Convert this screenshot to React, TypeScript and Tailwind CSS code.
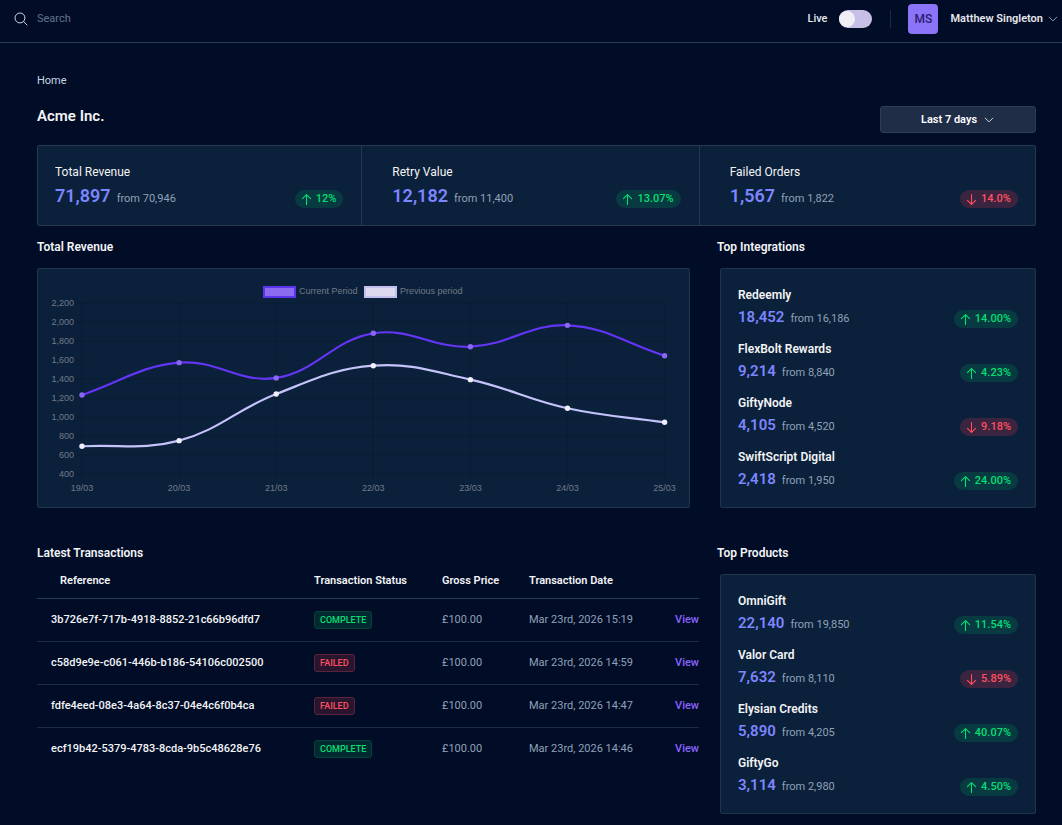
import { useState } from "react";
import {
  HiOutlineArrowDown,
  HiOutlineArrowUp,
  HiOutlineChevronDown,
  HiOutlineMagnifyingGlass,
} from "react-icons/hi2";

type Metric = {
  name: string;
  value: string;
  from: string;
  change: string;
  up: boolean;
};

type Point = { x: number; y: number };

const stats: Metric[] = [
  { name: "Total Revenue", value: "71,897", from: "70,946", change: "12%", up: true },
  { name: "Retry Value", value: "12,182", from: "11,400", change: "13.07%", up: true },
  { name: "Failed Orders", value: "1,567", from: "1,822", change: "14.0%", up: false },
];

const integrations: Metric[] = [
  { name: "Redeemly", value: "18,452", from: "16,186", change: "14.00%", up: true },
  { name: "FlexBolt Rewards", value: "9,214", from: "8,840", change: "4.23%", up: true },
  { name: "GiftyNode", value: "4,105", from: "4,520", change: "9.18%", up: false },
  { name: "SwiftScript Digital", value: "2,418", from: "1,950", change: "24.00%", up: true },
];

const products: Metric[] = [
  { name: "OmniGift", value: "22,140", from: "19,850", change: "11.54%", up: true },
  { name: "Valor Card", value: "7,632", from: "8,110", change: "5.89%", up: false },
  { name: "Elysian Credits", value: "5,890", from: "4,205", change: "40.07%", up: true },
  { name: "GiftyGo", value: "3,114", from: "2,980", change: "4.50%", up: true },
];

const transactions = [
  { ref: "3b726e7f-717b-4918-8852-21c66b96dfd7", status: "COMPLETE", price: "£100.00", date: "Mar 23rd, 2026 15:19" },
  { ref: "c58d9e9e-c061-446b-b186-54106c002500", status: "FAILED", price: "£100.00", date: "Mar 23rd, 2026 14:59" },
  { ref: "fdfe4eed-08e3-4a64-8c37-04e4c6f0b4ca", status: "FAILED", price: "£100.00", date: "Mar 23rd, 2026 14:47" },
  { ref: "ecf19b42-5379-4783-8cda-9b5c48628e76", status: "COMPLETE", price: "£100.00", date: "Mar 23rd, 2026 14:46" },
];

const days = ["19/03", "20/03", "21/03", "22/03", "23/03", "24/03", "25/03"];
const ticks = [2200, 2000, 1800, 1600, 1400, 1200, 1000, 800, 600, 400];
const current = [1232, 1572, 1411, 1881, 1740, 1965, 1645];
const previous = [692, 751, 1242, 1540, 1393, 1092, 944];

const xAt = (i: number) => 44 + i * 97.1;
const yAt = (value: number) => 205 - ((value - 400) * 19) / 200;

// Smooth line through the points, control handles scaled by neighbour distance
function splinePath(points: Point[], tension = 0.4) {
  const dist = (a: Point, b: Point) => Math.hypot(b.x - a.x, b.y - a.y);
  const handles = points.map((p, i) => {
    const prev = points[i - 1] || p;
    const next = points[i + 1] || p;
    const d01 = dist(prev, p);
    const d12 = dist(p, next);
    const a = (tension * d01) / (d01 + d12);
    const b = (tension * d12) / (d01 + d12);
    return {
      before: { x: p.x - a * (next.x - prev.x), y: p.y - a * (next.y - prev.y) },
      after: { x: p.x + b * (next.x - prev.x), y: p.y + b * (next.y - prev.y) },
    };
  });
  return points.reduce((d, p, i) => {
    if (i === 0) return `M${p.x} ${p.y}`;
    const c1 = handles[i - 1].after;
    const c2 = handles[i].before;
    return `${d}C${c1.x} ${c1.y} ${c2.x} ${c2.y} ${p.x} ${p.y}`;
  }, "");
}

function Series({ values, line, dot }: { values: number[]; line: string; dot: string }) {
  const points = values.map((v, i) => ({ x: xAt(i), y: yAt(v) }));
  return (
    <g>
      <path d={splinePath(points)} fill="none" stroke={line} strokeWidth="2.2" />
      {points.map((p) => (
        <circle key={p.x} cx={p.x} cy={p.y} r="2.7" fill={dot} />
      ))}
    </g>
  );
}

function RevenueChart() {
  return (
    <svg
      viewBox="0 0 651 238"
      role="img"
      aria-label="Total Revenue"
      className="block h-auto w-full font-['Liberation_Sans',Arial,sans-serif] text-[9px]"
    >
      <g stroke="#000" strokeOpacity="0.1">
        {ticks.map((t) => (
          <line key={t} x1="38" x2="627" y1={yAt(t)} y2={yAt(t)} />
        ))}
        {days.map((d, i) => (
          <line key={d} x1={xAt(i)} x2={xAt(i)} y1="34" y2="211" />
        ))}
      </g>

      <rect x="226" y="18" width="31" height="10" fill="#8b6cf0" stroke="#5b35ee" strokeWidth="2" />
      <rect x="327" y="18" width="31" height="10" fill="#ddd9f0" stroke="#c3bfee" strokeWidth="2" />

      <g fill="#717b88">
        <text x="261" y="25">Current Period</text>
        <text x="362" y="25">Previous period</text>
        {ticks.map((t) => (
          <text key={t} x="36" y={yAt(t) + 3} textAnchor="end">
            {t.toLocaleString("en-GB")}
          </text>
        ))}
        {days.map((d, i) => (
          <text key={d} x={xAt(i)} y="222" textAnchor="middle">
            {d}
          </text>
        ))}
      </g>

      <Series values={previous} line="#c4c4fa" dot="#f0effe" />
      <Series values={current} line="#6335f5" dot="#8a66f5" />
    </svg>
  );
}

function ChangePill({ change, up }: { change: string; up: boolean }) {
  const Icon = up ? HiOutlineArrowUp : HiOutlineArrowDown;
  return (
    <span
      className={`mb-px flex h-[18px] items-center gap-[3px] rounded-full pr-[7px] pl-[5px] text-[11px] leading-4 font-medium ${
        up ? "bg-[#073a41] text-[#05df72]" : "bg-[#3b243f] text-[#ff5060]"
      }`}
    >
      <Icon className="size-[13px]" strokeWidth={2} aria-hidden="true" />
      {change}
    </span>
  );
}

function MetricList({ items }: { items: Metric[] }) {
  return (
    <ul className="ml-[3px] space-y-2.5 rounded-xs border border-[#1f354b] bg-[#0b203a] px-[17px] py-4">
      {items.map((item) => (
        <li key={item.name}>
          <h3 className="text-xs leading-5 font-semibold text-gray-100">{item.name}</h3>
          <div className="flex h-6 items-end justify-between">
            <p className="flex items-baseline gap-1.5">
              <span className="text-[15px] leading-6 font-semibold text-[#7c86ff]">{item.value}</span>
              <span className="text-slate-400">from {item.from}</span>
            </p>
            <ChangePill change={item.change} up={item.up} />
          </div>
        </li>
      ))}
    </ul>
  );
}

function SectionTitle({ children }: { children: string }) {
  return <h2 className="mb-[13px] text-xs leading-4 font-semibold text-gray-100">{children}</h2>;
}

export default function App() {
  const [live, setLive] = useState(false);

  return (
    <div className="min-h-screen bg-[#010c26] font-[Roboto,sans-serif] text-[11px] leading-4 text-white antialiased">
      <header className="flex h-[43px] items-center border-b border-[#2b3b52] pr-[3px] pb-1 pl-[13px]">
        <label htmlFor="search" aria-label="Search" className="mr-2">
          <HiOutlineMagnifyingGlass className="size-4 text-slate-300" aria-hidden="true" />
        </label>
        <input
          id="search"
          type="search"
          placeholder="Search"
          className="min-w-0 flex-1 bg-transparent outline-none placeholder:text-slate-500"
        />
        <label htmlFor="live" className="mr-3 font-medium text-gray-200">
          Live
        </label>
        <input
          id="live"
          type="checkbox"
          role="switch"
          checked={live}
          onChange={(e) => setLive(e.target.checked)}
          className="h-[18px] w-[33px] cursor-pointer appearance-none rounded-full bg-[#c6c0e6] before:block before:size-4 before:translate-y-px before:rounded-full before:bg-[#f1eff5] checked:bg-violet-500 checked:before:translate-x-4"
        />
        <div className="mr-[17px] ml-[18px] h-[18px] w-px bg-[#1a2a44]" />
        <button type="button" className="flex items-center">
          <span className="flex size-[30px] items-center justify-center rounded bg-[#8b74f7] text-xs font-medium text-[#2a1c70]">
            MS
          </span>
          <span className="mr-1 ml-3 font-semibold text-gray-200">Matthew Singleton</span>
          <HiOutlineChevronDown className="size-3 text-slate-400" strokeWidth={2} aria-hidden="true" />
        </button>
      </header>

      <main className="pt-[30px] pr-[26px] pb-[11px] pl-[37px]">
        <nav aria-label="Breadcrumb">
          <a href="#" className="block text-slate-300">
            Home
          </a>
        </nav>

        <div className="mt-[17px] mb-3 flex items-start justify-between">
          <h1 className="text-[15px] leading-5 font-semibold text-gray-100">Acme Inc.</h1>
          <button
            type="button"
            className="flex h-[27px] w-[156px] items-center justify-center gap-1.5 rounded-[3px] border border-[#2e3d55] bg-[#1f2d47] font-semibold"
          >
            Last 7 days
            <HiOutlineChevronDown className="size-3 text-slate-300" strokeWidth={2} aria-hidden="true" />
          </button>
        </div>

        <dl className="flex divide-x divide-[#243a51] rounded-xs border border-[#243a51] bg-[#0b203a]">
          {stats.map((stat) => (
            <div key={stat.name} className="flex-1 py-4 pr-[18px] pl-[30px] first:pl-[17px] last:pr-[17px]">
              <dt className="text-xs leading-5 text-gray-100">{stat.name}</dt>
              <dd className="flex h-[27px] items-end justify-between">
                <p className="flex items-baseline gap-1.5">
                  <span className="text-lg leading-[26px] font-semibold text-[#7c86ff]">{stat.value}</span>
                  <span className="text-slate-400">from {stat.from}</span>
                </p>
                <ChangePill change={stat.change} up={stat.up} />
              </dd>
            </div>
          ))}
        </dl>

        <div className="mt-[13px] grid grid-cols-[minmax(0,1fr)_319px] gap-x-[18px] gap-y-[37px]">
          <section>
            <SectionTitle>Total Revenue</SectionTitle>
            <div className="mr-[9px] rounded-xs border border-[#1f354b] bg-[#0b203a]">
              <RevenueChart />
            </div>
          </section>

          <section>
            <SectionTitle>Top Integrations</SectionTitle>
            <MetricList items={integrations} />
          </section>

          <section>
            <h2 className="text-xs leading-4 font-semibold text-gray-100">Latest Transactions</h2>
            <table className="w-full table-fixed text-left">
              <thead>
                <tr className="h-[37px] border-b border-[#2b3b52] text-gray-100 *:pt-[3px]">
                  <th className="w-[277px] pl-[23px] font-semibold">Reference</th>
                  <th className="w-32 font-semibold">Transaction Status</th>
                  <th className="w-[87px] font-semibold">Gross Price</th>
                  <th className="font-semibold">Transaction Date</th>
                  <th className="w-10" aria-label="Actions" />
                </tr>
              </thead>
              <tbody className="divide-y divide-[#1d2c43]">
                {transactions.map((tx) => (
                  <tr key={tx.ref} className="h-[43px] *:pt-px">
                    <td className="pl-3.5 font-medium text-gray-100">{tx.ref}</td>
                    <td>
                      <span
                        className={`inline-block rounded-[3px] border px-[5px] align-middle text-[9px] leading-4 font-medium ${
                          tx.status === "COMPLETE"
                            ? "border-[#05423c] bg-[#032a31] text-[#05df72]"
                            : "border-[#5a2339] bg-[#2a152f] text-[#ff5060]"
                        }`}
                      >
                        {tx.status}
                      </span>
                    </td>
                    <td className="text-slate-400">{tx.price}</td>
                    <td className="text-slate-400">{tx.date}</td>
                    <td className="text-right">
                      <a href="#" className="font-medium text-[#8b63ff]">
                        View
                      </a>
                    </td>
                  </tr>
                ))}
              </tbody>
            </table>
          </section>

          <section>
            <SectionTitle>Top Products</SectionTitle>
            <MetricList items={products} />
          </section>
        </div>
      </main>
    </div>
  );
}
